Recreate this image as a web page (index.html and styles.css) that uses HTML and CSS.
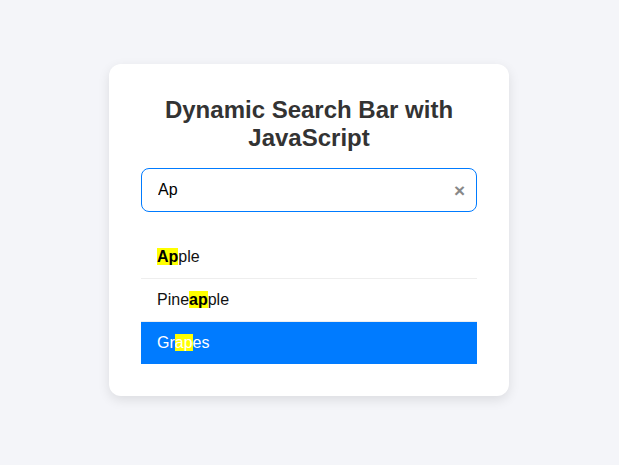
FILE: index.html
```html
<!DOCTYPE html>
<html>
<head>
<meta charset="utf-8">
<link rel="stylesheet" href="styles.css">
</head>
<body>
<div class="card">
  <h2 class="title">Dynamic Search Bar with JavaScript</h2>
  <div class="search">
    <input class="search-input" type="text" value="Ap">
    <button class="clear">×</button>
  </div>
  <ul class="results">
    <li class="item"><mark class="hl">Ap</mark>ple</li>
    <li class="item">Pine<mark class="hl">ap</mark>ple</li>
    <li class="item active">Gr<mark class="hl">ap</mark>es</li>
  </ul>
</div>
</body>
</html>
```
FILE: styles.css
```css
html, body {
  margin: 0;
  padding: 0;
}
body {
  font-family: "Liberation Sans", Arial, sans-serif;
  background: #f4f5f9;
  width: 619px;
  height: 465px;
  display: flex;
  justify-content: center;
  align-items: center;
}
.card {
  background: #fff;
  width: 400px;
  box-sizing: border-box;
  padding: 32px;
  border-radius: 12px;
  box-shadow: 0 4px 12px rgba(0, 0, 0, 0.1);
  margin: -5px 1px 0 0;
}
.title {
  margin: 0 0 16px;
  font-size: 24px;
  line-height: 28px;
  text-align: center;
  color: #333;
  font-weight: bold;
}
.search {
  position: relative;
}
.search-input {
  display: block;
  width: 100%;
  box-sizing: border-box;
  height: 44px;
  padding: 0 40px 0 16px;
  font-family: inherit;
  font-size: 16px;
  color: #000;
  border: 1px solid #007bff;
  border-radius: 8px;
  outline: none;
}
.clear {
  position: absolute;
  right: 10px;
  top: 50%;
  transform: translateY(-50%);
  background: none;
  border: none;
  padding: 0 2px;
  font-family: inherit;
  font-size: 19px;
  font-weight: bold;
  color: #888;
  line-height: 1;
}
.results {
  list-style: none;
  margin: 24px 0 0;
  padding: 0;
}
.item {
  padding: 12px 16px;
  font-size: 16px;
  line-height: 18px;
  color: #111;
  border-bottom: 1px solid #eee;
}
.item:last-child {
  border-bottom: none;
}
.hl {
  background: #ffff00;
  color: #000;
  font-weight: bold;
}
.active {
  background: #007bff;
  color: #fff;
}
.active .hl {
  color: #fff;
  font-weight: normal;
}
```
